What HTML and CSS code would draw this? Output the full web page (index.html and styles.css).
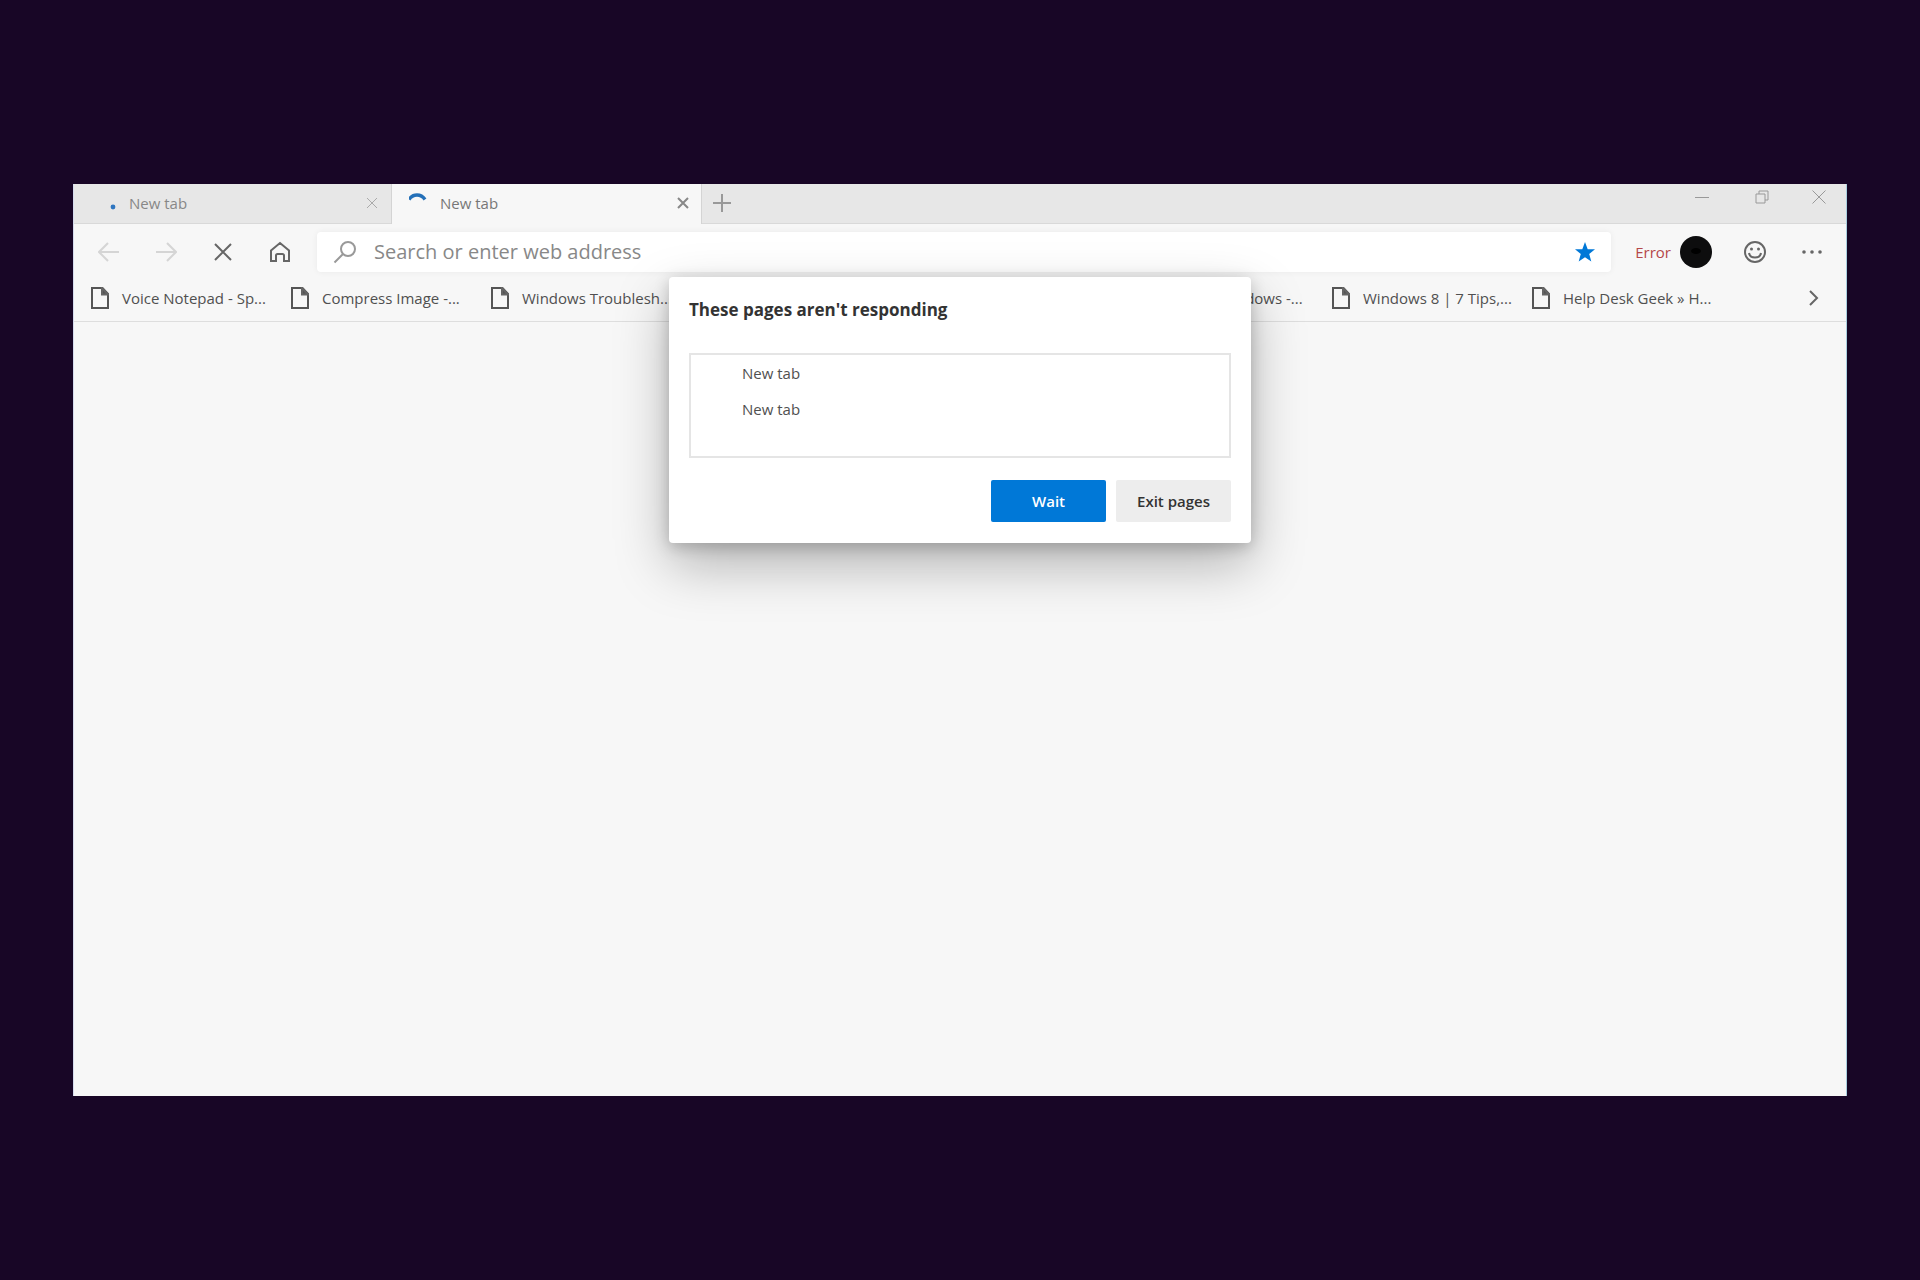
FILE: index.html
```html
<!DOCTYPE html>
<html lang="en">
<head>
    <meta charset="UTF-8">
    <meta name="viewport" content="width=device-width, initial-scale=1.0">
    <title>New tab</title>
    <link rel="stylesheet" href="styles.css">
</head>
<body>
    <div class="window">
        <header class="tab-strip">
            <div class="tab">
                <svg class="tab-icon" width="20" height="20" viewBox="0 0 20 20"><circle cx="9" cy="14" r="2.4" fill="#2f76c0"/></svg>
                <span class="tab-title">New tab</span>
                <button class="tab-close" type="button" aria-label="Close tab">
                    <svg width="12" height="12" viewBox="0 0 12 12"><path d="M1 1l10 10M11 1L1 11"/></svg>
                </button>
            </div>
            <div class="tab active">
                <svg class="tab-icon" width="20" height="20" viewBox="0 0 20 20"><path d="M0 6.500C4 .5 12 .5 16 6.500" fill="none" stroke="#2470b8" stroke-width="3.400"/></svg>
                <span class="tab-title">New tab</span>
                <button class="tab-close" type="button" aria-label="Close tab">
                    <svg width="12" height="12" viewBox="0 0 12 12"><path d="M1 1l10 10M11 1L1 11"/></svg>
                </button>
            </div>
            <button class="new-tab" type="button" aria-label="New tab">
                <svg width="18" height="18" viewBox="0 0 18 18"><path d="M9 0v18M0 9h18"/></svg>
            </button>
            <div class="window-controls">
                <button type="button" aria-label="Minimize">
                    <svg width="14" height="14" viewBox="0 0 14 14"><path d="M0 7.500h14"/></svg>
                </button>
                <button type="button" aria-label="Restore">
                    <svg width="14" height="14" viewBox="0 0 14 14"><path d="M1 4h9v9H1zM4 4V1h9v9h-3"/></svg>
                </button>
                <button type="button" aria-label="Close">
                    <svg width="14" height="14" viewBox="0 0 14 14"><path d="M.5.5l13 13M13.500.5l-13 13"/></svg>
                </button>
            </div>
        </header>

        <div class="toolbar">
            <button class="tool disabled" type="button" aria-label="Back">
                <svg width="22" height="20" viewBox="0 0 22 20"><path d="M21 10H1.500M10 1l-9 9 9 9"/></svg>
            </button>
            <button class="tool disabled" type="button" aria-label="Forward">
                <svg width="22" height="20" viewBox="0 0 22 20"><path d="M1 10h19.500M12 1l9 9-9 9"/></svg>
            </button>
            <button class="tool" type="button" aria-label="Stop">
                <svg width="18" height="18" viewBox="0 0 18 18"><path d="M1 1l16 16M17 1L1 17"/></svg>
            </button>
            <button class="tool" type="button" aria-label="Home">
                <svg width="20" height="22" viewBox="0 0 20 22"><path d="M1 9.500L10 2l9 7.500V20h-5v-5.500a1.500 1.500 0 0 0-1.500-1.500h-5A1.500 1.500 0 0 0 6 14.500V20H1z"/></svg>
            </button>
            <div class="address-bar">
                <svg width="24" height="24" viewBox="0 0 24 24"><circle cx="15" cy="9" r="7"/><path d="M10 14l-8.500 8.500"/></svg>
                <input type="text" aria-label="Address" placeholder="Search or enter web address">
                <button type="button" aria-label="Favorite">
                    <svg class="star" width="20" height="20" viewBox="0 0 20 20"><path d="M10 0l2.700 7.200H20l-5.800 4.700 2.100 7.600L10 15.200l-6.300 4.300 2.100-7.600L0 7.200h7.300z"/></svg>
                </button>
            </div>
            <button class="profile" type="button">
                <span>Error</span>
                <svg width="32" height="32" viewBox="0 0 32 32"><circle cx="16" cy="16" r="16" fill="#0d0d0e"/><ellipse cx="16" cy="15" rx="5" ry="3" fill="#000"/></svg>
            </button>
            <button class="tool smile" type="button" aria-label="Send feedback">
                <svg width="24" height="24" viewBox="0 0 24 24"><circle cx="12" cy="12" r="10"/><path d="M6 13c1 6 11 6 12 0"/><circle class="dot" cx="8.500" cy="9" r="1.500"/><circle class="dot" cx="15.500" cy="9" r="1.500"/></svg>
            </button>
            <button class="tool" type="button" aria-label="Settings and more">
                <svg width="22" height="6" viewBox="0 0 22 6"><circle class="dot" cx="3" cy="3" r="1.800"/><circle class="dot" cx="11" cy="3" r="1.800"/><circle class="dot" cx="19" cy="3" r="1.800"/></svg>
            </button>
        </div>

        <!-- shared page icon for the favorites -->
        <svg width="0" height="0" class="symbols">
            <symbol id="page" viewBox="0 0 18 22"><path d="M1 1h10.500L17 7v14H1z" fill="none" stroke="#555" stroke-width="2"/><path d="M11 1v6.500h6z" fill="#555"/></symbol>
        </svg>
        <nav class="favorites">
            <a href="#"><svg width="18" height="22"><use href="#page"/></svg><span>Voice Notepad - Sp...</span></a>
            <a href="#"><svg width="18" height="22"><use href="#page"/></svg><span>Compress Image -...</span></a>
            <a href="#"><svg width="18" height="22"><use href="#page"/></svg><span>Windows Troublesh...</span></a>
            <div class="favorites-end">
                <a href="#"><svg width="18" height="22"><use href="#page"/></svg><span>Update Windows -...</span></a>
                <a href="#"><svg width="18" height="22"><use href="#page"/></svg><span>Windows 8 | 7 Tips,...</span></a>
                <a href="#"><svg width="18" height="22"><use href="#page"/></svg><span>Help Desk Geek » H...</span></a>
            </div>
            <button class="more" type="button" aria-label="More favorites">
                <svg width="10" height="16" viewBox="0 0 10 16"><path d="M1 1l7 7-7 7"/></svg>
            </button>
        </nav>

        <main class="page"></main>

        <div class="dialog" role="dialog" aria-labelledby="dialogTitle">
            <h1 id="dialogTitle">These pages aren't responding</h1>
            <ul>
                <li>New tab</li>
                <li>New tab</li>
            </ul>
            <div class="dialog-buttons">
                <button class="primary" type="button">Wait</button>
                <button type="button">Exit pages</button>
            </div>
        </div>
    </div>
</body>
</html>
```
FILE: styles.css
```css
* {
    box-sizing: border-box;
}

body {
    margin: 0;
    padding: 184px 73px;
    min-height: 100vh;
    display: flex;
    background-color: #180626;
    font-family: "Open Sans", "Noto Sans", sans-serif;
    font-size: 15px;
    color: #505050;
}

button {
    padding: 0;
    border: none;
    background: none;
    font: inherit;
    color: inherit;
    display: flex;
    align-items: center;
    justify-content: center;
    cursor: pointer;
}

svg {
    flex: none;
    fill: none;
    stroke: #666;
    stroke-width: 2;
}

.dot {
    fill: #666;
    stroke: none;
}

.symbols {
    position: absolute;
}

.tab-icon, .profile svg {
    stroke: none;
}

.window {
    position: relative;
    flex: 1;
    min-width: 0;
    display: flex;
    flex-direction: column;
    background-color: #f7f7f7;
    border-left: 1px solid #d5dcee;
    border-right: 1px solid #a9cfe0;
}

/* Tabs */
.tab-strip {
    display: flex;
    height: 40px;
    background-color: #e7e7e7;
    box-shadow: inset 0 -1px #d9d9d9;
    color: #888;
}

.tab {
    display: flex;
    align-items: center;
    width: 318px;
    padding: 0 13px 2px 30px;
    border-right: 1px solid #d4d4d4;
}

.tab.active {
    width: 310px;
    padding: 0 12px 2px 17px;
    background-color: #f7f7f7;
    color: #777;
}

.tab-title {
    flex: 1;
    margin-left: 5px;
}

.active .tab-title {
    margin-left: 11px;
}

.tab-close svg {
    stroke: #aaa;
    stroke-width: 1;
}

.active .tab-close svg {
    stroke: #888;
    stroke-width: 2;
}

.new-tab {
    width: 40px;
    height: 38px;
}

.new-tab svg {
    stroke: #999;
}

.window-controls {
    display: flex;
    margin-left: auto;
    height: 26px;
}

.window-controls button {
    width: 60px;
}

.window-controls button:last-child {
    width: 54px;
}

.window-controls svg {
    stroke: #999;
    stroke-width: 1;
}

/* Toolbar */
.toolbar {
    display: flex;
    align-items: center;
    height: 55px;
    padding: 0 6px;
}

.tool {
    width: 57px;
    height: 40px;
}

.disabled svg {
    stroke: #d5d5d5;
}

.address-bar {
    flex: 1;
    display: flex;
    align-items: center;
    height: 40px;
    margin-left: 9px;
    padding: 0 16px;
    background-color: #fff;
    border-radius: 4px;
    box-shadow: 0 0 6px rgba(0, 0, 0, 0.06);
}

.address-bar svg {
    stroke: #999;
}

.address-bar .star {
    fill: #0078d7;
    stroke: none;
}

.address-bar input {
    flex: 1;
    min-width: 0;
    margin-left: 17px;
    padding: 0;
    border: none;
    outline: none;
    background: none;
    font: inherit;
    font-size: 20px;
}

.address-bar input::placeholder {
    color: #888;
}

.profile {
    gap: 9px;
    margin-left: 24px;
    color: #b5484a;
}

.smile {
    margin-left: 14px;
}

/* Favorites */
.favorites {
    display: flex;
    align-items: center;
    height: 43px;
    padding: 0 20px 5px 17px;
    border-bottom: 1px solid #dedede;
}

.favorites a {
    display: flex;
    align-items: center;
    gap: 13px;
    width: 200px;
    color: #505050;
    text-decoration: none;
    white-space: nowrap;
}

.favorites-end {
    display: flex;
    margin-left: auto;
}

.more {
    width: 24px;
    height: 36px;
    margin-left: 70px;
}

/* Dialog */
.dialog {
    position: absolute;
    top: 93px;
    left: 50%;
    transform: translateX(-50%);
    width: 582px;
    padding: 21px 20px;
    background-color: #fff;
    border-radius: 4px;
    box-shadow: 0 22px 54px rgba(0, 0, 0, 0.28), 0 4px 16px rgba(0, 0, 0, 0.2);
}

.dialog h1 {
    margin: 0;
    font-size: 17px;
    line-height: 24px;
    color: #333;
}

.dialog ul {
    height: 105px;
    margin: 31px 0 22px;
    padding: 0 51px;
    border: 2px solid #e5e5e5;
    list-style: none;
}

.dialog li {
    line-height: 36px;
}

.dialog-buttons {
    display: flex;
    justify-content: flex-end;
    gap: 10px;
}

.dialog-buttons button {
    width: 115px;
    height: 42px;
    border-radius: 2px;
    background-color: #ededed;
    color: #333;
    font-weight: 600;
}

.dialog-buttons .primary {
    background-color: #0078d7;
    color: #fff;
}
```
